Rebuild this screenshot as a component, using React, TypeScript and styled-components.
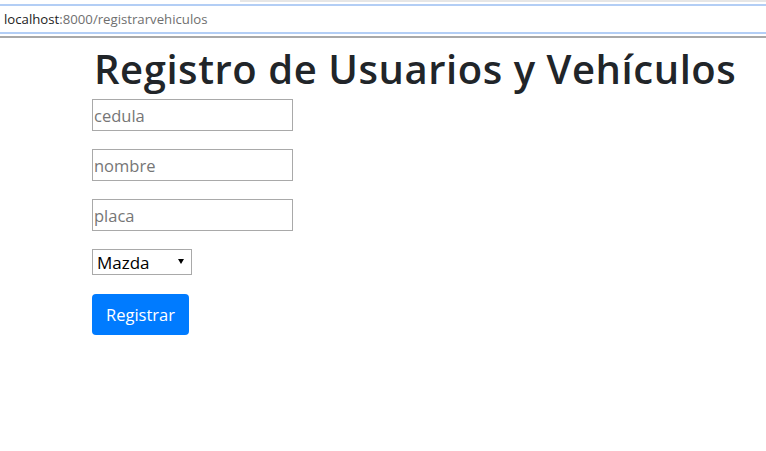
import React from "react";
import styled, { createGlobalStyle } from "styled-components";

const Global = createGlobalStyle`
  html, body { margin: 0; padding: 0; background: #fff; }
  body { font-family: "Open Sans", "Noto Sans", sans-serif; color: #212529; }
`;

const Chrome = styled.div`
  height: 38px;
  display: flex;
  flex-direction: column;
`;

const TabEdge = styled.div`
  height: 2px;
  margin-left: 240px;
  background: #e6e6e6;
`;

const AddressBar = styled.div`
  margin-top: 2px;
  height: 26px;
  border-top: 2px solid #b3cef5;
  border-bottom: 2px solid #b3cef5;
  display: flex;
  align-items: center;
  padding-left: 4px;
  font-family: "Open Sans", sans-serif;
  font-size: 13.2px;
`;

const Host = styled.span`
  color: #222;
`;

const Path = styled.span`
  color: #6f6f6f;
`;

const Divider = styled.div`
  margin-top: 2px;
  height: 2px;
  background: #a8a8a8;
`;

const Main = styled.main`
  padding-left: 92px;
  display: flex;
  flex-direction: column;
  align-items: flex-start;
`;

const Title = styled.h1`
  margin: 0 0 0 2px;
  font-family: "Open Sans", sans-serif;
  font-weight: 600;
  font-size: 40px;
  line-height: 61px;
  letter-spacing: 0.55px;
  color: #212529;
`;

const Form = styled.form`
  display: flex;
  flex-direction: column;
  align-items: flex-start;
  gap: 18px;
`;

const Input = styled.input`
  box-sizing: border-box;
  width: 201px;
  height: 32px;
  margin: 0;
  padding: 0 1px;
  border: 1px solid #a9a9a9;
  font-family: "Open Sans", sans-serif;
  font-size: 16.5px;
  color: #212529;
  outline: none;
  &::placeholder { color: #767676; }
`;

const SelectWrap = styled.div`
  position: relative;
  width: 100px;
  height: 26px;
  &::after {
    content: "";
    position: absolute;
    right: 8px;
    top: 10px;
    border-left: 3px solid transparent;
    border-right: 3px solid transparent;
    border-top: 5px solid #000;
    pointer-events: none;
  }
`;

const Select = styled.select`
  box-sizing: border-box;
  width: 100%;
  height: 100%;
  margin: 0;
  padding: 0 4px;
  border: 1px solid #a9a9a9;
  border-radius: 0;
  background: #fff;
  appearance: none;
  -webkit-appearance: none;
  font-family: "Open Sans", sans-serif;
  font-size: 17px;
  color: #000;
  outline: none;
`;

const Button = styled.button`
  box-sizing: border-box;
  width: 97px;
  height: 41px;
  margin-top: 1px;
  border: none;
  border-radius: 4px;
  background: #007bff;
  color: #fff;
  font-family: "Open Sans", sans-serif;
  font-size: 16.5px;
  cursor: pointer;
`;

export default function App() {
  return (
    <>
      <Global />
      <Chrome>
        <TabEdge />
        <AddressBar>
          <Host>localhost</Host>
          <Path>:8000/registrarvehiculos</Path>
        </AddressBar>
        <Divider />
      </Chrome>
      <Main>
        <Title>Registro de Usuarios y Vehículos</Title>
        <Form onSubmit={(e) => e.preventDefault()}>
          <Input placeholder="cedula" />
          <Input placeholder="nombre" />
          <Input placeholder="placa" />
          <SelectWrap>
            <Select defaultValue="Mazda">
              <option>Mazda</option>
              <option>Toyota</option>
              <option>Chevrolet</option>
            </Select>
          </SelectWrap>
          <Button type="submit">Registrar</Button>
        </Form>
      </Main>
    </>
  );
}
